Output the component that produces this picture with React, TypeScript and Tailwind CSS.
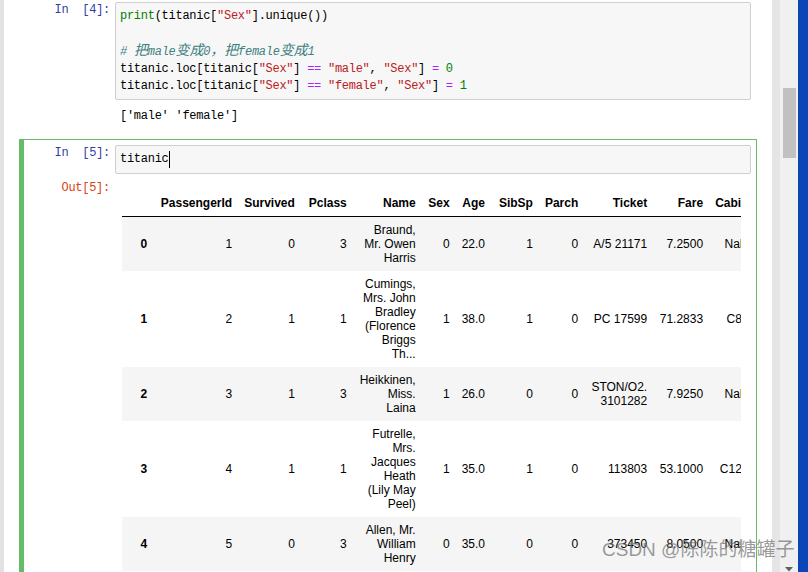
const mono = "font-['Liberation_Mono','Noto_Sans_CJK_SC',monospace] text-[12px] tracking-[-0.27px] leading-[17.25px]";

const cols = [
  { key: "", w: "w-[32px]" },
  { key: "PassengerId", w: "w-[85px]" },
  { key: "Survived", w: "w-[62px]" },
  { key: "Pclass", w: "w-[52px]" },
  { key: "Name", w: "w-[69px]" },
  { key: "Sex", w: "w-[34px]" },
  { key: "Age", w: "w-[35px]" },
  { key: "SibSp", w: "w-[48px]" },
  { key: "Parch", w: "w-[45px]" },
  { key: "Ticket", w: "w-[69px]" },
  { key: "Fare", w: "w-[56px]" },
  { key: "Cabin", w: "w-[45px]" },
  { key: "Embarked", w: "w-[80px]" },
];

const rows = [
  ["1", "0", "3", "Braund, Mr. Owen Harris", "0", "22.0", "1", "0", "A/5 21171", "7.2500", "NaN", "S"],
  ["2", "1", "1", "Cumings, Mrs. John Bradley (Florence Briggs Th...", "1", "38.0", "1", "0", "PC 17599", "71.2833", "C85", "C"],
  ["3", "1", "3", "Heikkinen, Miss. Laina", "1", "26.0", "0", "0", "STON/O2. 3101282", "7.9250", "NaN", "S"],
  ["4", "1", "1", "Futrelle, Mrs. Jacques Heath (Lily May Peel)", "1", "35.0", "1", "0", "113803", "53.1000", "C123", "S"],
  ["5", "0", "3", "Allen, Mr. William Henry", "0", "35.0", "0", "0", "373450", "8.0500", "NaN", "S"],
];

function Str({ children }: { children: string }) {
  return <span className="text-[#ba2121]">{children}</span>;
}
function Op({ children }: { children: string }) {
  return <span className="text-[#aa22ff]">{children}</span>;
}
function Num({ children }: { children: string }) {
  return <span className="text-[#008000]">{children}</span>;
}
function Cjk({ children }: { children: string }) {
  return <span className="text-[14px] tracking-[-0.1px]">{children}</span>;
}

function Prompt({ label, color }: { label: string; color: string }) {
  return (
    <div className={`w-[91px] shrink-0 pr-[5px] text-right whitespace-pre ${mono} ${color}`}>
      {label}
    </div>
  );
}

function DataFrame() {
  return (
    <table className="w-[712px] border-separate border-spacing-0 font-['Liberation_Sans',Arial,sans-serif] text-[12px] leading-[14px] text-black">
      <thead>
        <tr>
          {cols.map((c, i) => (
            <th
              key={i}
              className={`${c.w} border-b border-black px-[6px] py-[6px] text-right align-middle font-bold`}
            >
              {c.key}
            </th>
          ))}
        </tr>
      </thead>
      <tbody>
        {rows.map((r, i) => (
          <tr key={i} className={i % 2 === 0 ? "bg-[#f5f5f5]" : "bg-white"}>
            <th className="px-[6px] py-[6px] text-right align-middle font-bold">{i}</th>
            {r.map((v, j) => (
              <td key={j} className="px-[6px] py-[6px] text-right align-middle">
                {v}
              </td>
            ))}
          </tr>
        ))}
      </tbody>
    </table>
  );
}

export default function App() {
  return (
    <div className="relative flex h-[572px] w-[808px] overflow-hidden bg-white">
      <div className="w-[4px] shrink-0 bg-[#e2e2e2]" />

      <div className="w-[768px] shrink-0 overflow-hidden bg-white px-[15px]">
        {/* cell 4 */}
        <div className="mt-[-4px] border border-l-[5px] border-transparent py-[5px] pr-[5px]">
          <div className="flex">
            <Prompt label={"In  [4]:"} color="text-[#303f9f]" />
            <div className={`flex-1 rounded-[2px] border border-[#cfcfcf] bg-[#f7f7f7] px-[4px] pt-[5px] pb-[4px] text-black ${mono}`}>
              <div className="whitespace-pre">
                <span className="text-[#008000]">print</span>(titanic[<Str>"Sex"</Str>].unique())
              </div>
              <div className="h-[17.25px]" />
              <div className="whitespace-pre italic text-[#408080]">
                # <Cjk>把</Cjk>male<Cjk>变成</Cjk>0<Cjk>，把</Cjk>female<Cjk>变成</Cjk>1
              </div>
              <div className="whitespace-pre">
                titanic.loc[titanic[<Str>"Sex"</Str>] <Op>==</Op> <Str>"male"</Str>, <Str>"Sex"</Str>] <Op>=</Op> <Num>0</Num>
              </div>
              <div className="whitespace-pre">
                titanic.loc[titanic[<Str>"Sex"</Str>] <Op>==</Op> <Str>"female"</Str>, <Str>"Sex"</Str>] <Op>=</Op> <Num>1</Num>
              </div>
            </div>
          </div>
          <div className="mt-[8px] flex">
            <div className="w-[91px] shrink-0" />
            <div className={`pl-[5px] whitespace-pre text-black ${mono}`}>['male' 'female']</div>
          </div>
        </div>

        {/* cell 5, selected */}
        <div className="mt-[7px] border border-l-[5px] border-[#66bb6a] py-[5px] pr-[5px]">
          <div className="flex">
            <Prompt label={"In  [5]:"} color="text-[#303f9f]" />
            <div className={`flex-1 rounded-[2px] border border-[#cfcfcf] bg-[#f7f7f7] px-[4px] pt-[5px] pb-[5px] text-black ${mono}`}>
              <div className="whitespace-pre">
                titanic<span className="inline-block h-[17px] w-px align-top bg-black" />
              </div>
            </div>
          </div>
          <div className="flex">
            <div className="pt-[6px]">
              <Prompt label="Out[5]:" color="text-[#d84315]" />
            </div>
            <div className="ml-[7px] mr-[10px] flex-1 overflow-hidden pt-[16px]">
              <DataFrame />
            </div>
          </div>
        </div>
      </div>

      <div className="w-[8px] shrink-0 bg-[#e5e5e5]" />
      <div className="flex w-[18px] shrink-0 flex-col bg-[#f0f0f0]">
        <div className="mt-[88px] ml-[3px] h-[70px] w-[13px] bg-[#c1c1c1]" />
        <div className="mt-auto flex justify-center pb-0">
          <svg width="8" height="5" viewBox="0 0 8 5">
            <path d="M0 0 L8 0 L4 4.5 Z" fill="#606060" />
          </svg>
        </div>
      </div>
      <div className="w-[10px] shrink-0 bg-[#0c45b8]" />

      <div className="pointer-events-none absolute left-[602px] top-[538px] whitespace-nowrap font-['Liberation_Sans','Noto_Sans_CJK_SC',sans-serif] text-[19px] leading-[24px] text-[rgba(110,110,110,0.7)]">
        CSDN @陈陈的糖罐子
      </div>
    </div>
  );
}
